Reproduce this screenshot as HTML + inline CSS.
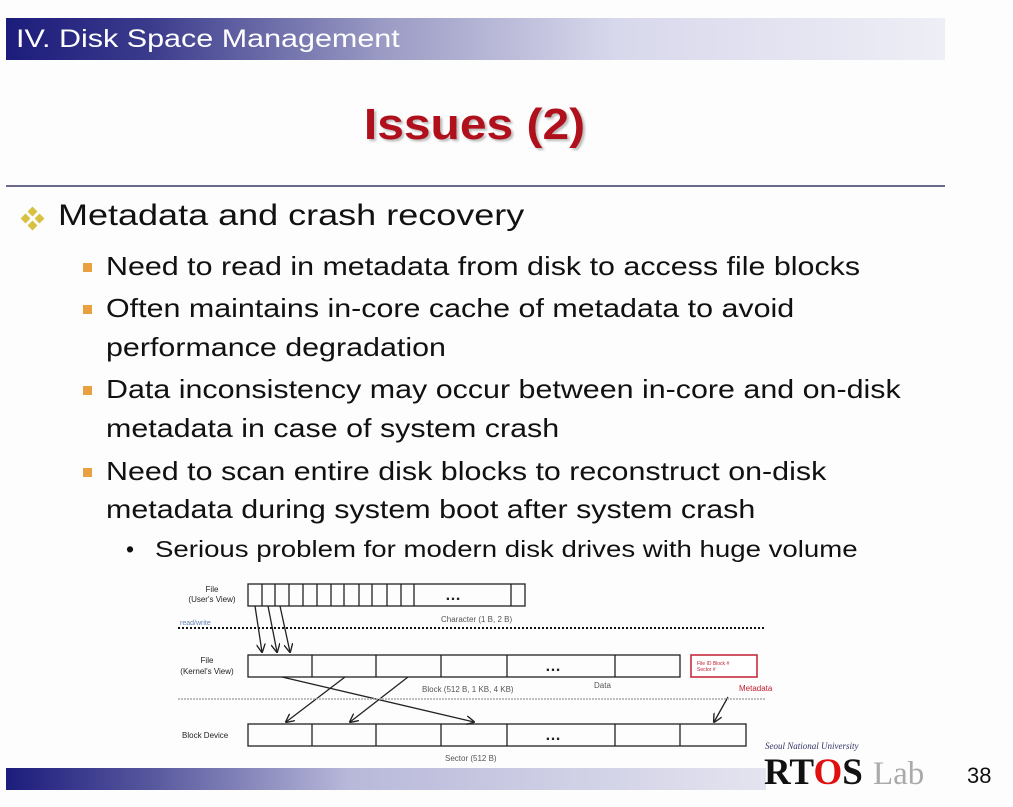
<!DOCTYPE html>
<html><head><meta charset="utf-8"><style>
body{margin:0;width:1013px;height:807px;background:#fdfdfd;position:relative;overflow:hidden;font-family:"Liberation Sans",sans-serif;}
.hdr{position:absolute;left:6px;top:18px;width:939px;height:42px;background:linear-gradient(90deg,#1c1c7c 0%,#3a3a8c 15%,#9a9ac4 40%,#d8d8ec 65%,#eeeef6 100%);}
.hdr span{position:absolute;left:10px;top:7px;color:#fff;font-size:25px;transform:scaleX(1.22);transform-origin:left;white-space:nowrap;}
.title{position:absolute;left:0;width:948px;top:100px;text-align:center;color:#b0101c;font-size:44px;font-weight:bold;text-shadow:2px 2px 2px #bbb;}
.title span{display:inline-block;transform:scaleX(1.09);}
.line{position:absolute;left:6px;top:185px;width:939px;height:2px;background:#6a6a8c;}
.t{position:absolute;color:#111;white-space:nowrap;transform-origin:left;}
.l1{font-size:30px;left:58px;transform:scaleX(1.2);}
.l2{font-size:26px;left:106px;transform:scaleX(1.17);}
.sq{position:absolute;width:9px;height:9px;background:#e8a040;left:83px;}
.foot{position:absolute;left:6px;top:768px;width:760px;height:22px;background:linear-gradient(90deg,#1c1c7c 0%,#5a5aa0 20%,#b8b8da 45%,#e4e4f0 100%);}
</style></head><body>
<div class="hdr"><span>IV. Disk Space Management</span></div>
<div class="title"><span>Issues (2)</span></div>
<div class="line"></div>
<svg style="position:absolute;left:20px;top:206px" width="26" height="26" viewBox="0 0 26 26"><g fill="#d8c040"><rect x="9" y="2" width="7" height="7" transform="rotate(45 12.5 5.5)"/><rect x="2" y="9" width="7" height="7" transform="rotate(45 5.5 12.5)"/><rect x="16" y="9" width="7" height="7" transform="rotate(45 19.5 12.5)"/><rect x="9" y="16" width="7" height="7" transform="rotate(45 12.5 19.5)"/></g></svg>
<div class="t l1" style="top:199px">Metadata and crash recovery</div>
<div class="sq" style="top:263px"></div>
<div class="t l2" style="top:251px">Need to read in metadata from disk to access file blocks</div>
<div class="sq" style="top:305px"></div>
<div class="t l2" style="top:293px">Often maintains in-core cache of metadata to avoid</div>
<div class="t l2" style="top:332px">performance degradation</div>
<div class="sq" style="top:386px"></div>
<div class="t l2" style="top:374px">Data inconsistency may occur between in-core and on-disk</div>
<div class="t l2" style="top:413px">metadata in case of system crash</div>
<div class="sq" style="top:468px"></div>
<div class="t l2" style="top:456px">Need to scan entire disk blocks to reconstruct on-disk</div>
<div class="t l2" style="top:494px">metadata during system boot after system crash</div>
<div class="t" style="top:536px;left:126px;font-size:23px">•</div>
<div class="t" style="top:536px;left:155px;font-size:23px;transform:scaleX(1.2)">Serious problem for modern disk drives with huge volume</div>
<div class="foot"></div>
<svg style="position:absolute;left:0;top:0" width="1013" height="807" font-family="Liberation Sans, sans-serif">
<defs><marker id="a" viewBox="0 0 10 10" refX="9" refY="5" markerWidth="7" markerHeight="7" orient="auto"><path d="M0 0L10 5L0 10" fill="none" stroke="#222" stroke-width="1.5"/></marker></defs>
<g fill="none" stroke="#222" stroke-width="1.3">
<rect x="248" y="584" width="277" height="22"/>
<path d="M262 584v22M275 584v22M289 584v22M303 584v22M317 584v22M331 584v22M344 584v22M359 584v22M372 584v22M387 584v22M401 584v22M414 584v22M511 584v22"/>
<rect x="248" y="655" width="432" height="22"/>
<path d="M312 655v22M376 655v22M441 655v22M507 655v22M615 655v22"/>
<rect x="248" y="724" width="498" height="22"/>
<path d="M312 724v22M376 724v22M441 724v22M507 724v22M615 724v22M680 724v22"/>
<g marker-end="url(#a)">
<path d="M255 606L262 652"/><path d="M268 606L277 652"/><path d="M280 606L290 652"/>
<path d="M282 677L474 722"/><path d="M345 677L286 722"/><path d="M408 677L350 722"/><path d="M728 697L714 722"/>
</g>
</g>
<g fill="#222" font-size="9">
<text x="445" y="600" font-size="16" font-weight="bold">…</text>
<text x="545" y="671" font-size="16" font-weight="bold">…</text>
<text x="545" y="740" font-size="16" font-weight="bold">…</text>
<text x="212" y="592" font-size="8" text-anchor="middle">File</text>
<text x="212" y="602" font-size="8" text-anchor="middle">(User's View)</text>
<text x="207" y="663" font-size="8" text-anchor="middle">File</text>
<text x="207" y="674" font-size="8" text-anchor="middle">(Kernel's View)</text>
<text x="182" y="738" font-size="8">Block Device</text>
<text x="441" y="622" font-size="8" fill="#555">Character (1 B, 2 B)</text>
<text x="422" y="692" font-size="8" fill="#555">Block (512 B, 1 KB, 4 KB)</text>
<text x="594" y="688" font-size="8" fill="#555">Data</text>
<text x="445" y="761" font-size="8" fill="#555">Sector (512 B)</text>
<text x="180" y="625" font-size="7" fill="#6080b0">read/write</text>
<text x="739" y="691" font-size="8" fill="#c02030">Metadata</text>
</g>
<line x1="178" y1="628" x2="765" y2="628" stroke="#111" stroke-width="2" stroke-dasharray="2,2"/>
<line x1="178" y1="699" x2="765" y2="699" stroke="#aaa" stroke-width="1.5" stroke-dasharray="2,1"/>
<rect x="691" y="655" width="66" height="22" fill="#fff" stroke="#c02030" stroke-width="1.5"/>
<text x="697" y="665" font-size="5" fill="#c02030">File ID Block #</text>
<text x="697" y="671" font-size="5" fill="#c02030">Sector #</text>
<text x="765" y="749" font-size="9" font-style="italic" fill="#336" font-family="Liberation Serif, serif">Seoul National University</text>
<text x="764" y="784" font-size="37" font-weight="bold" fill="#111" font-family="Liberation Serif, serif">RT<tspan fill="#e01010">O</tspan>S</text>
<text x="873" y="784" font-size="33" fill="#aaa" font-family="Liberation Serif, serif">Lab</text>
<text x="967" y="783" font-size="22" fill="#111">38</text>
</svg>
</body></html>
